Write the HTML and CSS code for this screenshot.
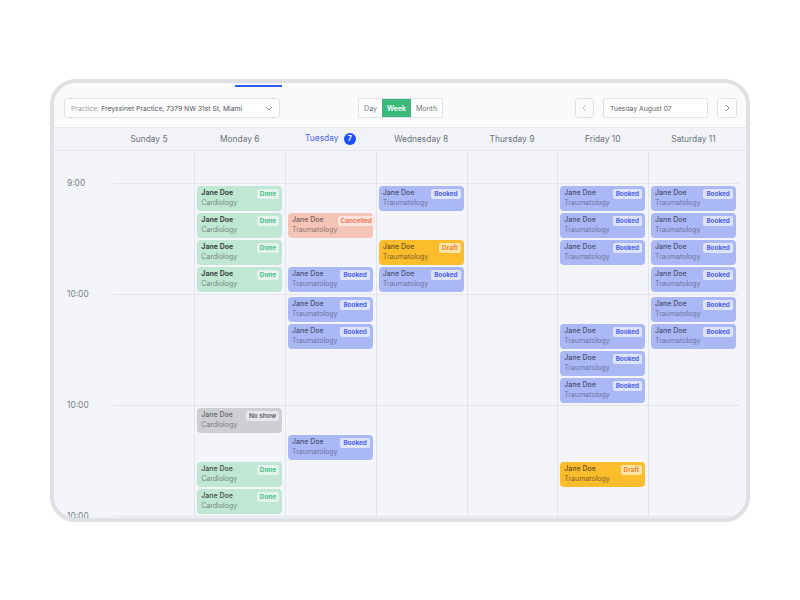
FILE: index.html
```html
<!DOCTYPE html>
<html lang="en">
<head>
  <meta charset="UTF-8">
  <title>Week schedule</title>
  <link rel="stylesheet" href="styles.css">
</head>
<body>
  <div class="device">
    <div class="screen">
      <span class="tab-indicator"></span>

      <!-- toolbar -->
      <div class="toolbar">
        <div class="select">
          <span class="select-text"><span class="select-label">Practice:</span> Freyssinet Practice, 7379 NW 31st St, Miami</span>
          <svg class="chevron" width="8" height="5" viewBox="0 0 8 5"><path d="M1 1l3 3 3-3" fill="none" stroke="#8a8d95" stroke-width="1"/></svg>
        </div>

        <div class="segmented">
          <button class="seg-btn day">Day</button>
          <button class="seg-btn week active">Week</button>
          <button class="seg-btn month">Month</button>
        </div>

        <div class="toolbar-right">
          <button class="icon-btn disabled">
            <svg width="5" height="8" viewBox="0 0 5 8"><path d="M4 1L1 4l3 3" fill="none" stroke="#c3c5cb" stroke-width="1"/></svg>
          </button>
          <div class="date-input">Tuesday August 07</div>
          <button class="icon-btn">
            <svg width="5" height="8" viewBox="0 0 5 8"><path d="M1 1l3 3-3 3" fill="none" stroke="#8a8d95" stroke-width="1"/></svg>
          </button>
        </div>
      </div>

      <!-- day names -->
      <div class="week-head">
        <div></div>
        <div class="day-name">Sunday 5</div>
        <div class="day-name">Monday 6</div>
        <div class="day-name today">Tuesday <span class="day-badge">7</span></div>
        <div class="day-name">Wednesday 8</div>
        <div class="day-name">Thursday 9</div>
        <div class="day-name">Friday 10</div>
        <div class="day-name">Saturday 11</div>
      </div>

      <!-- grid -->
      <div class="week-body" id="week-body">
        <div class="gutter">
          <div class="hour-label">9:00</div>
          <div class="hour-label">10:00</div>
          <div class="hour-label">10:00</div>
          <div class="hour-label">10:00</div>
        </div>
      </div>
    </div>
  </div>

  <script>
    // slot index (15 min each) -> status
    const week = [
      {},
      { 0: 'done strong', 1: 'done strong', 2: 'done strong', 3: 'done strong', 8: 'noshow', 10: 'done', 11: 'done' },
      { 1: 'cancelled', 3: 'booked', 4: 'booked', 5: 'booked', 9: 'booked' },
      { 0: 'booked', 2: 'draft', 3: 'booked' },
      {},
      { 0: 'booked', 1: 'booked', 2: 'booked', 5: 'booked', 6: 'booked', 7: 'booked', 10: 'draft' },
      { 0: 'booked', 1: 'booked', 2: 'booked', 3: 'booked', 4: 'booked', 5: 'booked' }
    ];

    const labels = {
      done: 'Done',
      booked: 'Booked',
      cancelled: 'Cancelled',
      draft: 'Draft',
      noshow: 'No show'
    };

    function cardHtml(status) {
      const kind = status.split(' ')[0];
      const dept = (kind === 'done' || kind === 'noshow') ? 'Cardiology' : 'Traumatology';
      return `<div class="appt ${status}">
          <div class="appt-info">
            <div class="appt-name">Jane Doe</div>
            <div class="appt-dept">${dept}</div>
          </div>
          <span class="appt-badge">${labels[kind]}</span>
        </div>`;
    }

    const body = document.getElementById('week-body');
    week.forEach((day, i) => {
      let html = '';
      for (let h = 0; h < 4; h++) {
        html += '<div class="hour">';
        for (let s = 0; s < 4; s++) {
          const slot = h * 4 + s;
          html += '<div class="slot">' + (day[slot] ? cardHtml(day[slot]) : '') + '</div>';
        }
        html += '</div>';
      }
      const col = document.createElement('div');
      col.className = i === 0 ? 'day-col first' : 'day-col';
      col.innerHTML = html;
      body.appendChild(col);
    });
  </script>
</body>
</html>
```

FILE: styles.css
```css
* {
  box-sizing: border-box;
  margin: 0;
  padding: 0;
}

body {
  background: #fff;
  font-family: Inter, 'Noto Sans', sans-serif;
  color: #555;
}

button {
  font-family: inherit;
  border: none;
  background: none;
}

/* tablet frame */
.device {
  width: 700px;
  height: 443px;
  margin: 79px 0 0 50px;
  border: 4px solid #dfe0e3;
  border-radius: 26px;
  overflow: hidden;
  box-shadow: 0 1px 2px rgba(0,0,0,0.06);
}

.screen {
  position: relative;
  height: 100%;
  background: #f4f5fa;
}

.tab-indicator {
  position: absolute;
  top: 2px;
  left: 181px;
  width: 47px;
  height: 2px;
  background: #2f5cff;
}

/* toolbar */
.toolbar {
  height: 45px;
  display: grid;
  grid-template-columns: 1fr auto 1fr;
  align-items: start;
  padding: 15px 9px 0 10px;
  background: #fafafb;
  border-bottom: 1px solid #e6e7ec;
}

.select {
  width: 216px;
  height: 20px;
  display: flex;
  align-items: center;
  justify-content: space-between;
  padding: 0 6px;
  background: #fff;
  border: 1px solid #dfe1e6;
  border-radius: 3px;
  font-size: 6.8px;
  color: #4f535c;
}

.select-label {
  color: #9a9da5;
}

.segmented {
  display: flex;
  width: 85px;
  height: 20px;
  border: 1px solid #dfe1e6;
  border-radius: 2px;
  background: #fff;
  overflow: hidden;
}

.seg-btn {
  font-size: 7px;
  color: #70747d;
}

.seg-btn.day { width: 23px; }
.seg-btn.week { width: 29px; }
.seg-btn.month { width: 31px; }

.seg-btn.active {
  background: #3dba7b;
  color: #fff;
  font-weight: 600;
}

.toolbar-right {
  justify-self: end;
  display: flex;
  gap: 9px;
}

.icon-btn {
  width: 20px;
  height: 20px;
  display: flex;
  align-items: center;
  justify-content: center;
  background: #fff;
  border: 1px solid #dfe1e6;
  border-radius: 3px;
}

.icon-btn.disabled {
  width: 19px;
  background: #fbfbfc;
}

.date-input {
  width: 105px;
  height: 20px;
  display: flex;
  align-items: center;
  padding-left: 6px;
  background: #fff;
  border: 1px solid #dfe1e6;
  border-radius: 3px;
  font-size: 6.8px;
  color: #5a5e67;
}

/* day names */
.week-head {
  height: 23px;
  display: grid;
  grid-template-columns: 49.6px repeat(7, 90.75px);
  align-items: center;
  background: #f2f3f7;
  border-bottom: 1px solid #e4e6ec;
}

.day-name {
  text-align: center;
  font-size: 8.4px;
  color: #6d717c;
}

.day-name.today {
  color: #4a63f0;
}

.day-badge {
  display: inline-block;
  width: 12px;
  height: 12px;
  line-height: 12px;
  margin-left: 3px;
  border-radius: 50%;
  background: #1d4ff5;
  color: #fff;
  font-size: 7px;
  font-weight: 700;
  text-align: center;
}

/* week grid */
.week-body {
  display: grid;
  grid-template-columns: 49.6px repeat(7, 90.75px);
  height: 367px;
  overflow: hidden;
}

.gutter {
  padding: 26px 0 0 13px;
}

.hour-label {
  height: 111px;
  line-height: 12px;
  font-size: 8.4px;
  color: #7b7e87;
}

.day-col {
  padding-top: 32px;
  border-left: 1px solid #e3e5eb;
}

.day-col.first {
  border-left: none;
}

.day-col.first .hour {
  margin-left: 9px;
}

.hour {
  height: 111px;
  padding-top: 2px;
  border-top: 1px solid #e3e5eb;
}

.slot {
  height: 27px;
}

/* appointments */
.appt {
  height: 25px;
  margin: 0 3px 0 2px;
  padding: 2px 3px 0 4px;
  display: flex;
  justify-content: space-between;
  align-items: flex-start;
  border-radius: 4px;
  font-size: 7px;
}

.appt-name {
  line-height: 10px;
  font-weight: 500;
}

.appt-dept {
  line-height: 10px;
}

.appt-badge {
  margin-top: 1px;
  height: 10px;
  line-height: 10px;
  padding: 0 3px;
  border-radius: 2px;
  font-size: 6.4px;
  font-weight: 700;
}

.appt.strong .appt-name {
  font-weight: 700;
}

.appt.done {
  background: #bfe7d3;
  color: #76877e;
}

.appt.done .appt-name {
  color: #3f4944;
}

.appt.done .appt-badge {
  background: #e2f4eb;
  color: #4cbf88;
}

.appt.booked {
  background: #aab8f6;
  color: #6c74a0;
}

.appt.booked .appt-name {
  color: #4c5173;
}

.appt.booked .appt-badge {
  background: #dee3fc;
  color: #4b62ec;
}

.appt.cancelled {
  background: #f4c4b7;
  color: #8f736b;
}

.appt.cancelled .appt-name {
  color: #76605a;
}

.appt.cancelled .appt-badge {
  background: #fbe4dd;
  color: #f07a5a;
}

.appt.draft {
  background: #fbbd2b;
  color: #7d6224;
}

.appt.draft .appt-name {
  color: #6a5322;
}

.appt.draft .appt-badge {
  background: #fde3a4;
  color: #f2863a;
}

.appt.noshow {
  background: #cdcfd2;
  color: #7a7c80;
}

.appt.noshow .appt-name {
  color: #66686c;
}

.appt.noshow .appt-badge {
  background: #e7e7e9;
  color: #6b6d71;
}
```
